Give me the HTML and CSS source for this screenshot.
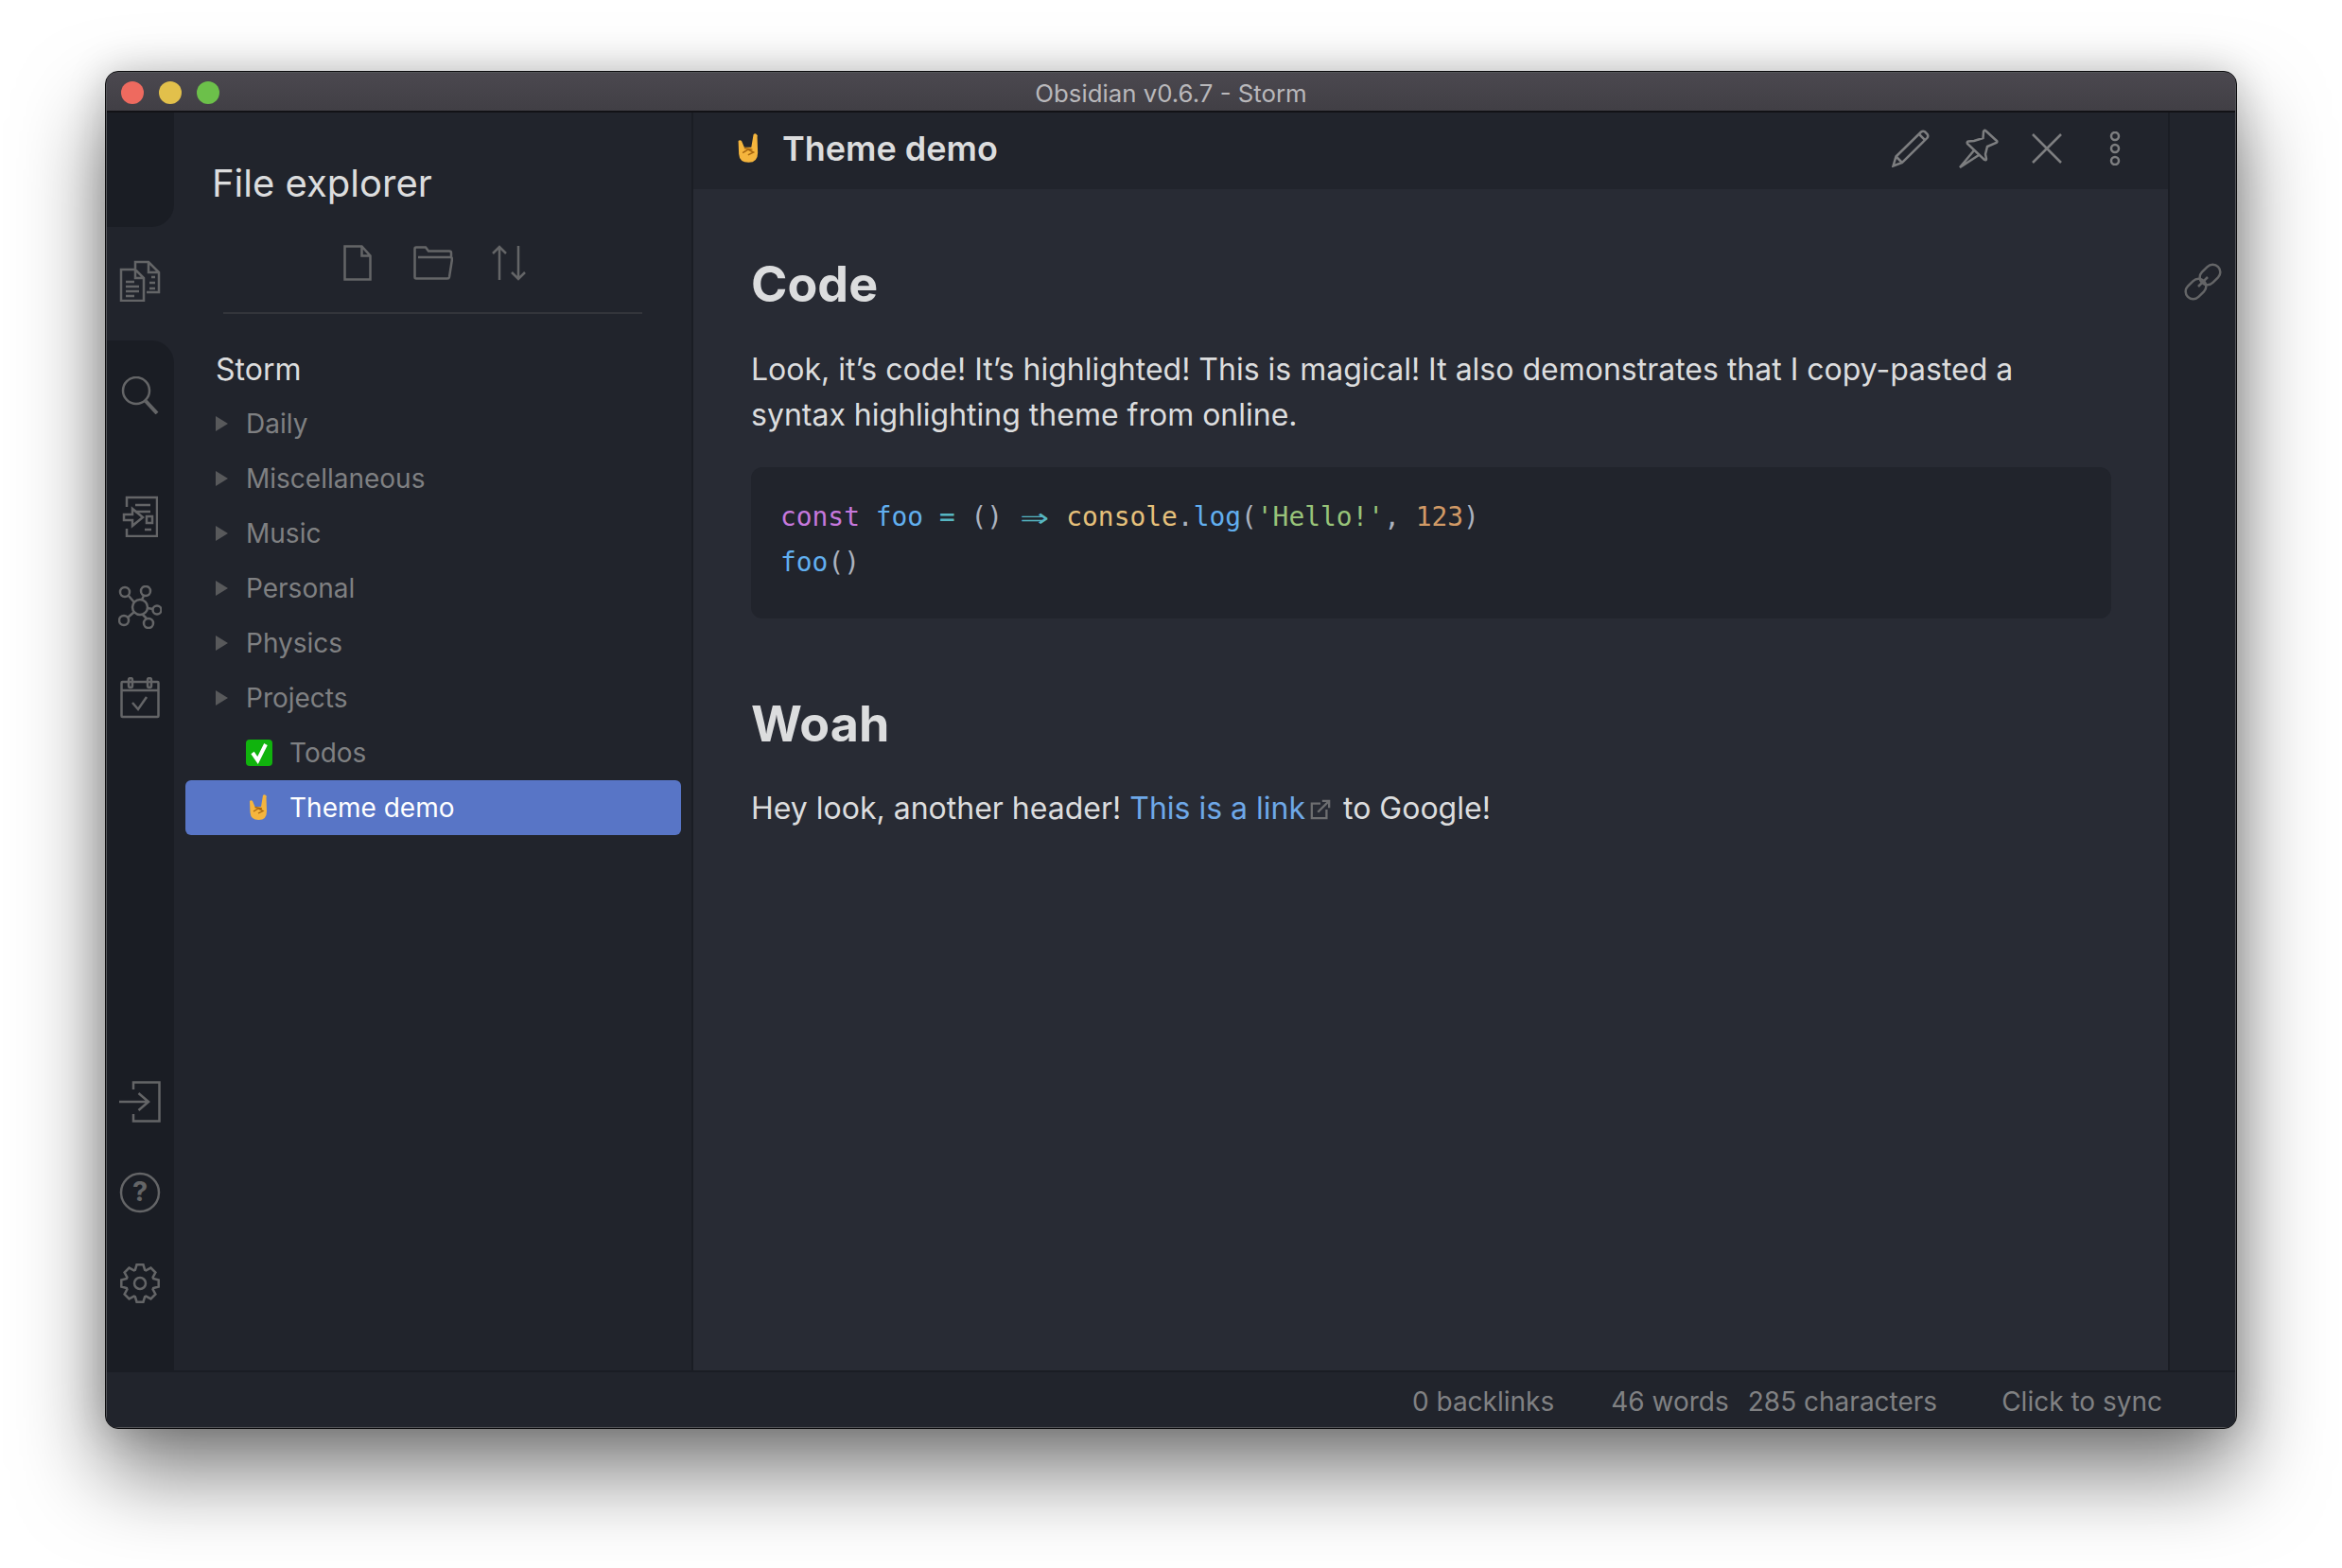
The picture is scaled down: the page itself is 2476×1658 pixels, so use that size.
FILE: index.html
```html
<!DOCTYPE html>
<html lang="en">
  <head>
    <meta charset="UTF-8" />
    <title>Obsidian v0.6.7 - Storm</title>
    <link rel="stylesheet" href="styles.css">
  </head>
  <body>
    <div class="window">
      <div class="titlebar">
        <div class="traffic">
          <span class="dot red"></span>
          <span class="dot yellow"></span>
          <span class="dot green"></span>
        </div>
        <span class="window-title">Obsidian v0.6.7 - Storm</span>
      </div>

      <div class="workspace">
        <div class="ribbon">
          <div class="ribbon-top"></div>
          <div class="ribbon-active">
            <svg class="icon" width="44" height="44" viewBox="0 0 44 44">
              <path d="M17 9V2h14l11 11v21H29M31 2v11h11" />
              <path d="M34 18h4M32 24h6M32 30h6" />
              <path d="M2 10h15l9 9v24H2zM17 10v9h9" />
              <path d="M7 23h9M7 28h14M7 33h14M7 38h9" />
            </svg>
          </div>
          <div class="ribbon-rest">
            <div class="ribbon-group">
              <div class="ribbon-slot search-slot">
                <svg class="icon" width="40" height="40" viewBox="0 0 40 40">
                  <circle cx="16" cy="15" r="14" />
                  <path d="M26 26l12 13" class="thick" />
                </svg>
              </div>
              <div class="ribbon-slot">
                <svg class="icon" width="38" height="44" viewBox="0 0 38 44">
                  <path d="M5 12V2h32v41H5v-8" />
                  <path d="M14 10h16M14 17h16M24 36h7" />
                  <path d="M2 20h9v-6l11 9-11 9v-6H2z" />
                  <rect x="26" y="22" width="6" height="7" />
                </svg>
              </div>
              <div class="ribbon-slot">
                <svg class="icon" width="46" height="46" viewBox="0 0 46 46">
                  <circle cx="23" cy="23" r="8" />
                  <circle cx="7" cy="7" r="5" />
                  <circle cx="29" cy="6" r="5" />
                  <circle cx="41" cy="26" r="4.5" />
                  <circle cx="32" cy="40" r="5" />
                  <circle cx="6" cy="37" r="5" />
                  <path d="M11 11l6 7M27 11l-2 4M31 24l6 1M26 31l4 4M17 28l-7 6" />
                </svg>
              </div>
              <div class="ribbon-slot">
                <svg class="icon" width="42" height="44" viewBox="0 0 42 44">
                  <rect x="1.5" y="5" width="39" height="37" rx="1" />
                  <path d="M1.5 14h39" />
                  <rect x="9" y="1" width="4" height="10" rx="2" />
                  <rect x="29" y="1" width="4" height="10" rx="2" />
                  <path d="M13 27l6 7 9-13" />
                </svg>
              </div>
            </div>
            <div class="ribbon-group">
              <div class="ribbon-slot">
                <svg class="icon" width="44" height="44" viewBox="0 0 44 44">
                  <path d="M15 9V1.500h27.500v41H15V35" />
                  <path d="M0 22h31M20.500 13l10.500 9-10.500 9" />
                </svg>
              </div>
              <div class="ribbon-slot">
                <svg class="icon" width="44" height="44" viewBox="0 0 44 44">
                  <circle cx="22" cy="22" r="20" />
                  <text x="22" y="31" class="help-mark">?</text>
                </svg>
              </div>
              <div class="ribbon-slot">
                <svg class="icon" width="42" height="42" viewBox="0 0 42 42">
                  <path d="M15.87 6.900L17.53 1.300H24.470L26.130 6.900L27.340 7.400L32.470 4.620L37.380 9.530L34.600 14.660L35.100 15.870L40.700 17.530V24.470L35.100 26.130L34.600 27.340L37.380 32.470L32.470 37.380L27.340 34.600L26.130 35.100L24.470 40.700H17.530L15.870 35.100L14.660 34.600L9.530 37.380L4.620 32.470L7.400 27.340L6.900 26.130L1.300 24.470V17.530L6.900 15.870L7.400 14.660L4.620 9.530L9.530 4.620L14.660 7.400z" />
                  <circle cx="21" cy="21" r="6" />
                </svg>
              </div>
            </div>
          </div>
        </div>

        <div class="sidebar">
          <div class="sidebar-title">File explorer</div>
          <div class="file-actions">
            <div class="file-action">
              <svg class="icon" width="30" height="38" viewBox="0 0 30 38">
                <path d="M1.500 1.500h18l9 10v25h-27zM19.500 1.500v10h9" />
              </svg>
            </div>
            <div class="file-action">
              <svg class="icon" width="42" height="36" viewBox="0 0 42 36">
                <path d="M1.500 12V3q0-1.500 1.500-1.500h10l3 4h22q2 0 2 2V12" />
                <path d="M5 12h34q2 0 2 2l-3 19q-.3 1.500-2 1.500H3q-1.500 0-1.500-1.500V12" />
              </svg>
            </div>
            <div class="file-action">
              <svg class="icon" width="36" height="38" viewBox="0 0 36 38">
                <path d="M8 37V2M1 9l7-7 7 7" />
                <path d="M28 1v35M21 29l7 7 7-7" />
              </svg>
            </div>
          </div>
          <div class="vault-name">Storm</div>
          <div class="tree">
            <div class="tree-item"><span class="arrow"></span>Daily</div>
            <div class="tree-item"><span class="arrow"></span>Miscellaneous</div>
            <div class="tree-item"><span class="arrow"></span>Music</div>
            <div class="tree-item"><span class="arrow"></span>Personal</div>
            <div class="tree-item"><span class="arrow"></span>Physics</div>
            <div class="tree-item"><span class="arrow"></span>Projects</div>
            <div class="tree-item file">
              <svg class="emoji" width="28" height="28" viewBox="0 0 28 28">
                <rect width="28" height="28" rx="4" fill="#10b30d" />
                <path d="M7 14l5.500 8L21 5" fill="none" stroke="#fff" stroke-width="4" />
              </svg>
              Todos
            </div>
            <div class="tree-item file active">
              <svg class="emoji" width="28" height="28" viewBox="0 0 28 28">
                <path d="M4 7q1.500-1.500 3 0l2.500 6h6.500L18 1q1.500-1.500 3 0t.5 2L22 18q0 9-8.500 9T4.500 19z" fill="#f5b53d" />
                <path d="M9.500 13.500l7.500 1.500M8 18l5-3 5 2.500-5 2.500" fill="none" stroke="#a8660f" stroke-width="1.300" />
              </svg>
              Theme demo
            </div>
          </div>
        </div>

        <div class="main">
          <div class="tab-header">
            <svg class="emoji large" width="32" height="36" viewBox="0 0 28 28">
              <path d="M4 7q1.500-1.500 3 0l2.500 6h6.500L18 1q1.500-1.500 3 0t.5 2L22 18q0 9-8.500 9T4.500 19z" fill="#f5b53d" />
              <path d="M9.500 13.500l7.500 1.500M8 18l5-3 5 2.500-5 2.500" fill="none" stroke="#a8660f" stroke-width="1.300" />
            </svg>
            <span class="tab-title">Theme demo</span>
            <div class="tab-actions">
              <div class="tab-action">
                <svg class="icon bright" width="40" height="40" viewBox="0 0 40 40">
                  <path d="M1.500 38.500l3-10L31 2.500q2-1.500 4-.2l2.500 2.500q1.500 2 0 4L11 35z" />
                  <path d="M4.500 28.500l6.500 6.500M29 5l6 6" />
                </svg>
              </div>
              <div class="tab-action">
                <svg class="icon bright" width="42" height="42" viewBox="0 0 42 42">
                  <path d="M28 2l12 11q1 1-.5 2L30 19l-2 8 1 5q0 2-2 1L9 16q-1-2 1-2.500l6-.5 9.500-3L26 3q1-2 2-1z" />
                  <path d="M16 23L1 41l20-13" />
                </svg>
              </div>
              <div class="tab-action">
                <svg class="icon bright" width="32" height="32" viewBox="0 0 32 32">
                  <path d="M1 1l30 30M31 1L1 31" />
                </svg>
              </div>
              <div class="tab-action">
                <svg class="icon bright" width="12" height="36" viewBox="0 0 12 36">
                  <circle cx="6" cy="5" r="4" />
                  <circle cx="6" cy="18" r="4" />
                  <circle cx="6" cy="31" r="4" />
                </svg>
              </div>
            </div>
          </div>

          <div class="note">
            <h2>Code</h2>
            <p>Look, it’s code! It’s highlighted! This is magical! It also demonstrates that I copy-pasted a syntax highlighting theme from online.</p>
            <pre class="code"><span class="kw">const</span> <span class="fn">foo</span> <span class="op">=</span> () <span class="op arrow-lig">⇒</span> <span class="obj">console</span>.<span class="fn">log</span>(<span class="str">'Hello!'</span>, <span class="num">123</span>)
<span class="fn">foo</span>()</pre>
            <h2 class="second">Woah</h2>
            <p>Hey look, another header! <a class="link" href="#">This is a link</a><svg class="external" width="22" height="24" viewBox="0 0 24 24">
                <path d="M12 5H2v17h17V12" />
                <path d="M9 15L22 2M14 2h8v8" />
              </svg> to Google!</p>
          </div>
        </div>

        <div class="rail">
          <svg class="icon" width="40" height="40" viewBox="0 0 40 40">
            <rect x="-12" y="-8" width="24" height="16" rx="8" transform="translate(12.500 27.500) rotate(-45)" />
            <rect x="-12" y="-8" width="24" height="16" rx="8" transform="translate(27.500 12.500) rotate(-45)" />
            <path d="M15 25l10-10" />
          </svg>
        </div>
      </div>

      <div class="statusbar">
        <span class="status-backlinks">0 backlinks</span>
        <span class="status-words">46 words</span>
        <span class="status-chars">285 characters</span>
        <span>Click to sync</span>
      </div>
    </div>
  </body>
</html>
```

FILE: styles.css
```css
* {
  box-sizing: border-box;
}

html,
body {
  margin: 0;
  height: 1658px;
  overflow: hidden;
}

body {
  background-color: #ffffff;
  font-family: Inter, "Liberation Sans", sans-serif;
  padding: 75px 111px 0 111px;
}

.window {
  height: 1436px;
  display: flex;
  flex-direction: column;
  background-color: #55565a;
  border: 1px solid #0b0b0d;
  padding: 1px;
  border-radius: 14px;
  overflow: hidden;
  box-shadow: 0 46px 90px rgba(0, 0, 0, 0.52), 0 0 40px rgba(0, 0, 0, 0.18);
}

/* title bar */
.titlebar {
  height: 42px;
  flex: none;
  display: flex;
  align-items: center;
  justify-content: center;
  position: relative;
  background: linear-gradient(#4b484f, #413f45);
  border-bottom: 2px solid #121216;
  padding-top: 2px;
}

.traffic {
  position: absolute;
  left: 15px;
  top: 9px;
  display: flex;
  gap: 16px;
}

.dot {
  width: 24px;
  height: 24px;
  border-radius: 50%;
}

.red {
  background-color: #ee6a5f;
}

.yellow {
  background-color: #e2c04b;
}

.green {
  background-color: #6cc04a;
}

.window-title {
  font-size: 25.8px;
  color: #b9b8bb;
}

.workspace {
  flex: 1;
  min-height: 0;
  display: flex;
}

/* icons */
.icon {
  fill: none;
  stroke: #646567;
  stroke-width: 2.5;
  display: block;
  flex: none;
}

.icon.bright {
  stroke: #7d7e80;
}

.icon .thick {
  stroke-width: 4;
}

.help-mark {
  fill: #646567;
  stroke: none;
  font-size: 29px;
  font-weight: 700;
  text-anchor: middle;
}

/* ribbon */
.ribbon {
  width: 71px;
  flex: none;
  display: flex;
  flex-direction: column;
  background-color: #21242c;
}

.ribbon-top {
  height: 121px;
  background-color: #1a1d24;
  border-bottom-right-radius: 24px;
}

.ribbon-active {
  height: 120px;
  display: flex;
  justify-content: center;
  padding: 35px 1px 0 0;
}

.ribbon-rest {
  flex: 1;
  display: flex;
  flex-direction: column;
  justify-content: space-between;
  background-color: #1a1d24;
  border-top-right-radius: 24px;
  padding: 10px 1px 44px 0;
}

.ribbon-slot {
  height: 96px;
  display: flex;
  align-items: center;
  justify-content: center;
}

.search-slot {
  margin-bottom: 32px;
}

/* file explorer */
.sidebar {
  width: 549px;
  flex: none;
  background-color: #21242c;
  border-right: 2px solid #1a1d24;
}

.sidebar-title {
  font-size: 40px;
  line-height: 48px;
  color: #dcddde;
  padding: 51px 0 0 40px;
}

.file-actions {
  margin: 40px 52px 0;
  padding-bottom: 33px;
  height: 74px;
  display: flex;
  justify-content: center;
  border-bottom: 2px solid #33353b;
}

.file-action {
  width: 80px;
  display: flex;
  align-items: center;
  justify-content: center;
}

.vault-name {
  font-size: 32px;
  line-height: 40px;
  color: #dcddde;
  margin: 39px 0 8px 44px;
}

.tree {
  padding: 0 11px 0 12px;
}

.tree-item {
  height: 58px;
  display: flex;
  align-items: center;
  font-size: 28px;
  color: #7f8082;
  padding-left: 32px;
  border-radius: 6px;
}

.arrow {
  width: 0;
  height: 0;
  margin-right: 19px;
  border-left: 13px solid #58595b;
  border-top: 8px solid transparent;
  border-bottom: 8px solid transparent;
}

.tree-item.file {
  padding-left: 64px;
}

.emoji {
  flex: none;
  display: block;
  margin-right: 18px;
}

.tree-item.active {
  background-color: #5875c6;
  color: #ffffff;
}

/* main pane */
.main {
  flex: 1;
  min-width: 0;
  display: flex;
  flex-direction: column;
  background-color: #282b34;
}

.tab-header {
  height: 81px;
  flex: none;
  display: flex;
  align-items: center;
  background-color: #21242c;
  padding: 0 20px 6px 43px;
}

.emoji.large {
  margin-right: 19px;
}

.tab-title {
  font-size: 36px;
  font-weight: 600;
  color: #dcddde;
}

.tab-actions {
  margin-left: auto;
  display: flex;
}

.tab-action {
  width: 72px;
  display: flex;
  align-items: center;
  justify-content: center;
}

.note {
  padding: 70px 60px 0 61px;
  color: #dcddde;
}

.note h2 {
  font-size: 52px;
  font-weight: 700;
  line-height: 62px;
  margin: 0 0 35px;
}

.note h2.second {
  margin: 81px 0 34px;
}

.note p {
  font-size: 32px;
  line-height: 48px;
  margin: 0;
}

.link {
  color: #6ea8e8;
  text-decoration: none;
}

.external {
  fill: none;
  stroke: #6d6e70;
  stroke-width: 2.5;
  margin: 0 4px 0 5px;
  vertical-align: -2px;
}

.code {
  margin: 31px 0 0;
  padding: 29px 31px 35px;
  height: 160px;
  background-color: #21242c;
  border-radius: 12px;
  font-family: "DejaVu Sans Mono", "Liberation Mono", monospace;
  font-size: 27.9px;
  line-height: 48px;
  color: #abb2bf;
}

.kw {
  color: #c678dd;
}

.fn {
  color: #61afef;
}

.op {
  color: #56b6c2;
}

.arrow-lig {
  display: inline-block;
  width: 2ch;
  text-align: center;
  line-height: 1;
  transform: scale(1.8, 1.25);
}

.obj {
  color: #e5c07b;
}

.str {
  color: #98c379;
}

.num {
  color: #d19a66;
}

/* right rail */
.rail {
  width: 71px;
  flex: none;
  background-color: #21242c;
  border-left: 2px solid #1a1d24;
  display: flex;
  justify-content: center;
  padding-top: 159px;
}

/* status bar */
.statusbar {
  height: 60px;
  flex: none;
  display: flex;
  align-items: center;
  justify-content: flex-end;
  background-color: #21242c;
  border-top: 2px solid #1a1d24;
  padding: 3px 77px 0 0;
  font-size: 28px;
  color: #808183;
}

.status-backlinks {
  margin-right: 60px;
}

.status-words {
  margin-right: 20px;
}

.status-chars {
  margin-right: 68px;
}
```
